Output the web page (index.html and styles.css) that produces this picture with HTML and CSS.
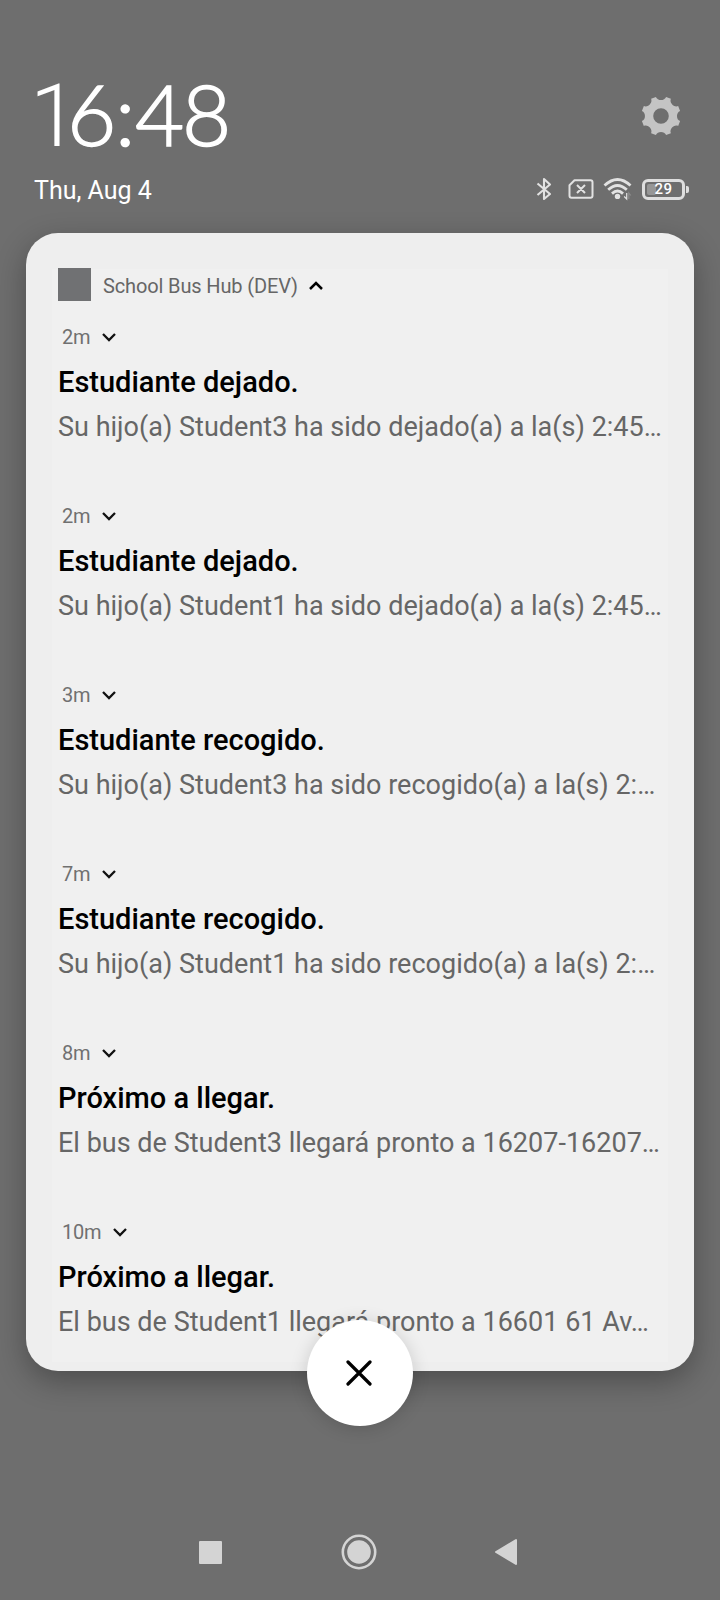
FILE: index.html
```html
<!DOCTYPE html>
<html lang="es">
<head>
<meta charset="utf-8">
<title>Notifications</title>
<link rel="stylesheet" href="styles.css">
</head>
<body>
<svg class="defs" width="0" height="0"><defs>
<symbol id="down" viewBox="0 0 16 10"><path d="M2 2l6 6 6-6" fill="none" stroke="#111" stroke-width="2.3"/></symbol>
</defs></svg>
<div class="screen">
  <header class="top">
    <div class="clock-row">
      <div class="clock"><span class="one">1</span><span class="six">6</span><span class="colon">:</span><span class="four">4</span><span class="eight">8</span></div>
      <svg class="gear" viewBox="0 0 40 40" width="40" height="40"><path fill="#c4c4c4" fill-rule="evenodd" d="M14.900 .9C16.500 5 23.500 5 25.100 .9L29.900 2.850C28.100 6.900 33.100 11.900 37.150 10.100L39.100 14.900C35 16.500 35 23.500 39.100 25.100L37.150 29.900C33.100 28.100 28.100 33.100 29.900 37.150L25.100 39.100C23.500 35 16.500 35 14.900 39.100L10.100 37.150C11.900 33.100 6.900 28.100 2.850 29.900L.9 25.100C5 23.500 5 16.500 .9 14.900L2.850 10.100C6.900 11.900 11.900 6.900 10.100 2.850ZM20 12.200A7.800 7.800 0 1 0 20 27.800A7.800 7.800 0 1 0 20 12.200Z"/></svg>
    </div>
    <div class="date-row">
      <div class="date">Thu, Aug 4</div>
      <div class="status">
        <svg class="bt" viewBox="0 0 16 24" width="16" height="24"><path d="M1.500 6.500L14 17 8 22V2l6 5.500L1.500 18" fill="none" stroke="#e2e2e2" stroke-width="2.100" stroke-linejoin="round"/></svg>
        <svg class="sim" viewBox="0 0 26 20" width="26" height="20"><path d="M6.500 1.200H22.500Q24.500 1.200 24.500 3.200V16.800Q24.500 18.800 22.500 18.800H3.500Q1.500 18.800 1.500 16.800V6.200ZM9 6l8 8M17 6l-8 8" fill="none" stroke="#e2e2e2" stroke-width="2" stroke-linejoin="round"/></svg>
        <svg class="wifi" viewBox="0 0 30 24" width="30" height="24"><g fill="none" stroke="#e2e2e2" stroke-width="2.800"><path d="M1.500 8.500Q14.500-3.500 27.500 8.500M5.200 12.800Q14.500 4.300 23.800 12.800M9 16.600Q14.500 11.500 20 16.600"/></g><circle cx="14.500" cy="19.400" r="2.700" fill="#e2e2e2"/><path d="M23.700 16v6l-2.500-2.500" fill="none" stroke="#e2e2e2" stroke-width="1.200"/><path d="M25.800 22v-6l2 2.500" fill="none" stroke="#8c8c8c" stroke-width="1.200"/></svg>
        <div class="battery"><span class="charge"></span><span class="level">29</span></div>
      </div>
    </div>
  </header>
  <main class="card">
    <div class="app"><span class="app-icon"></span><span class="app-name">School Bus Hub (DEV)</span><svg class="up" viewBox="0 0 16 10" width="16" height="10"><path d="M2 8l6-6 6 6" fill="none" stroke="#000" stroke-width="2.500"/></svg></div>
    <section class="note"><div class="time"><span>2m</span><svg width="16" height="10"><use href="#down"/></svg></div><h2 class="title">Estudiante dejado.</h2><p class="text">Su hijo(a) Student3 ha sido dejado(a) a la(s) 2:45…</p></section>
    <section class="note"><div class="time"><span>2m</span><svg width="16" height="10"><use href="#down"/></svg></div><h2 class="title">Estudiante dejado.</h2><p class="text">Su hijo(a) Student1 ha sido dejado(a) a la(s) 2:45…</p></section>
    <section class="note"><div class="time"><span>3m</span><svg width="16" height="10"><use href="#down"/></svg></div><h2 class="title">Estudiante recogido.</h2><p class="text">Su hijo(a) Student3 ha sido recogido(a) a la(s) 2:…</p></section>
    <section class="note"><div class="time"><span>7m</span><svg width="16" height="10"><use href="#down"/></svg></div><h2 class="title">Estudiante recogido.</h2><p class="text">Su hijo(a) Student1 ha sido recogido(a) a la(s) 2:…</p></section>
    <section class="note"><div class="time"><span>8m</span><svg width="16" height="10"><use href="#down"/></svg></div><h2 class="title">Próximo a llegar.</h2><p class="text">El bus de Student3 llegará pronto a 16207-16207…</p></section>
    <section class="note"><div class="time"><span>10m</span><svg width="16" height="10"><use href="#down"/></svg></div><h2 class="title">Próximo a llegar.</h2><p class="text">El bus de Student1 llegará pronto a 16601 61 Av…</p></section>
    <button class="close" aria-label="Close"><svg viewBox="0 0 26 26" width="26" height="26"><path d="M2 2l22 22M24 2L2 24" stroke="#000" stroke-width="3.200" stroke-linecap="round"/></svg></button>
  </main>
  <nav class="nav">
    <span class="recent"></span>
    <svg class="home" viewBox="0 0 36 36" width="36" height="36"><circle cx="18" cy="18" r="16.200" fill="none" stroke="#d4d4d4" stroke-width="2.600"/><circle cx="18" cy="18" r="11.800" fill="#d4d4d4"/></svg>
    <svg class="back" viewBox="0 0 24 28" width="24" height="28"><path d="M2 14L22 2V26Z" fill="#d4d4d4" stroke="#d4d4d4" stroke-width="2" stroke-linejoin="round"/></svg>
  </nav>
</div>
</body>
</html>
```
FILE: styles.css
```css
* { box-sizing: border-box; }
body { margin: 0; font-family: Roboto, "Liberation Sans", sans-serif; background: #6e6e6e; }
.defs { display: block; position: absolute; }
.screen { width: 720px; height: 1600px; overflow: hidden; background: #6e6e6e; display: flex; flex-direction: column; }
.top { height: 233px; padding-top: 63px; flex: none; }
.clock-row { height: 103px; display: flex; justify-content: space-between; padding: 0 39.5px 0 30px; }
.clock { display: flex; align-items: baseline; font-family: Lato, sans-serif; font-weight: 300; font-size: 85px; line-height: 100px; color: #fff; -webkit-text-stroke: 1.5px #fff; }
.one { width: 37px; font-family: Roboto, sans-serif; font-size: 87px; letter-spacing: -12px; -webkit-text-stroke-width: 0; }
.six { width: 48px; }
.colon { width: 20px; }
.four { width: 47px; }
.eight { width: 48px; }
.gear { margin-top: 33px; }
.date-row { height: 48px; padding: 0 30px 0 34px; display: flex; justify-content: space-between; align-items: center; }
.date { font-size: 25px; color: #fff; line-height: 48px; margin-top: 2px; }
.status { display: flex; align-items: center; margin-top: -2px; }
.bt { margin-right: 16px; }
.wifi { margin-left: 9px; }
.battery { position: relative; width: 43px; height: 21px; border: 3px solid #dedede; border-radius: 6px; margin: 0 5px 0 9px; display: flex; align-items: center; justify-content: center; }
.battery::after { content: ""; position: absolute; right: -7px; top: 4px; width: 3px; height: 7px; border-radius: 0 2px 2px 0; background: #dedede; }
.charge { position: absolute; left: 2px; top: 2px; width: 9px; height: 11px; border-radius: 2px; background: #969696; }
.level { position: relative; font-size: 15px; font-weight: 500; line-height: 15px; color: #fff; letter-spacing: .5px; }
.card { position: relative; flex: none; width: 668px; height: 1138px; margin-left: 26px; padding: 35px 32px 0; border-radius: 32px; background: linear-gradient(#f0f0f0, #f0f0f0) 26px 36px / 616px 1093px no-repeat #eeeeee; box-shadow: 0 10px 30px rgba(0,0,0,.3); }
.app { height: 33px; display: flex; align-items: center; }
.app-icon { width: 33px; height: 33px; background: #707173; }
.app-name { margin-left: 12px; padding-top: 3px; font-size: 20px; letter-spacing: -.13px; line-height: 33px; color: #666; }
.up { margin: 2px 0 0 10px; }
.note { height: 179px; padding-top: 22px; }
.time { height: 28px; padding-left: 4px; display: flex; align-items: center; gap: 11px; font-size: 20px; letter-spacing: -.2px; line-height: 28px; color: #707070; }
.title { margin: 12px 0 0; font-size: 29px; line-height: 38px; font-weight: 500; color: #000; white-space: nowrap; }
.text { margin: 6px 0 0; font-size: 27px; letter-spacing: .01px; line-height: 40px; color: #666; white-space: nowrap; }
.close { position: absolute; left: 281px; top: 1087px; width: 106px; height: 106px; padding: 0 2px 1px 0; border: 0; border-radius: 50%; background: #fff; box-shadow: 0 2px 18px rgba(0,0,0,.16); display: flex; align-items: center; justify-content: center; }
.nav { margin-top: auto; height: 96px; display: flex; align-items: center; padding: 0 202px 0 199px; justify-content: space-between; }
.recent { width: 23px; height: 23px; border-radius: 1px; background: #d4d4d4; }
.home { margin-left: 2px; }
```
